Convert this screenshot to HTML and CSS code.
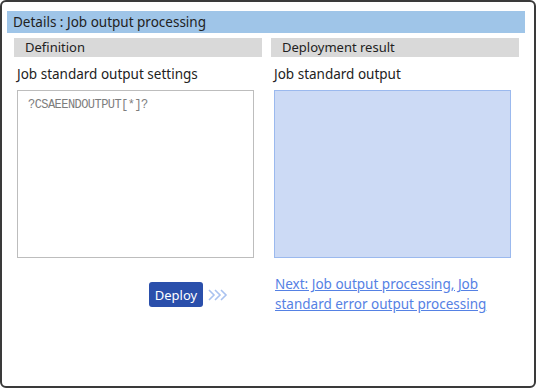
FILE: index.html
```html
<!DOCTYPE html>
<html lang="en">
<head>
    <meta charset="UTF-8">
    <title>Details : Job output processing</title>
    <link rel="stylesheet" href="styles.css">
</head>
<body>
    <div class="window">
        <div class="title">Details : Job output processing</div>
        <div class="columns">
            <div class="section-head">Definition</div>
            <div class="section-head">Deployment result</div>

            <div class="cell">
                <div class="label">Job standard output settings</div>
                <div class="box input-box">?CSAEENDOUTPUT[*]?</div>
            </div>
            <div class="cell">
                <div class="label">Job standard output</div>
                <div class="box result-box"></div>
            </div>

            <div class="deploy-row">
                <button class="deploy">Deploy</button>
                <svg class="chevrons" width="20" height="12" viewBox="0 0 20 12">
                    <path d="M1 1 L6 6 L1 11 M7 1 L12 6 L7 11 M13 1 L18 6 L13 11" fill="none" stroke="#a9c2f0" stroke-width="1.6"/>
                </svg>
            </div>
            <div class="next-row">
                <a href="#" class="next-link">Next: Job output processing, Job standard error output processing</a>
            </div>
        </div>
    </div>
</body>
</html>
```

FILE: styles.css
```css
body {
    margin: 0;
    font-family: 'Noto Sans', sans-serif;
    font-size: 13.5px;
    color: #222;
    background-color: #fff;
}
.window {
    box-sizing: border-box;
    width: 536px;
    height: 388px;
    border: 2px solid #3a3a3a;
    border-radius: 6px;
    padding: 9px 9px 0 5px;
}
.title {
    background-color: #9fc5e8;
    height: 22px;
    line-height: 22px;
    padding-left: 6px;
}
.columns {
    display: grid;
    grid-template-columns: 248px 248px;
    column-gap: 9px;
    padding: 5px 7px 0;
}
.section-head {
    background-color: #d9d9d9;
    height: 19px;
    line-height: 19px;
    padding-left: 11px;
    font-size: 13px;
}
.cell {
    padding-left: 3px;
}
.label {
    margin: 8px 0 6px;
    line-height: 19px;
}
.box {
    box-sizing: border-box;
    width: 237px;
    height: 168px;
}
.input-box {
    border: 1px solid #bdbdbd;
    padding: 7px 10px;
    font-family: 'Liberation Mono', monospace;
    font-size: 12px;
    letter-spacing: -0.55px;
    color: #7d7d7d;
}
.result-box {
    background-color: #ccdaf5;
    border: 1px solid #9bb9ee;
}
.deploy-row {
    display: flex;
    align-items: center;
    justify-content: flex-end;
    padding-right: 34px;
    margin-top: 17px;
}
.deploy {
    background-color: #2a4fab;
    color: #fff;
    border: none;
    border-radius: 3px;
    height: 25px;
    width: 54px;
    padding: 0;
    font-family: 'Noto Sans', sans-serif;
    font-size: 13px;
    cursor: pointer;
}
.chevrons {
    margin-left: 5px;
}
.next-row {
    padding-left: 4px;
    margin-top: 16px;
    width: 230px;
}
.next-link {
    color: #5581e4;
    line-height: 20px;
    font-size: 13.5px;
}
```
